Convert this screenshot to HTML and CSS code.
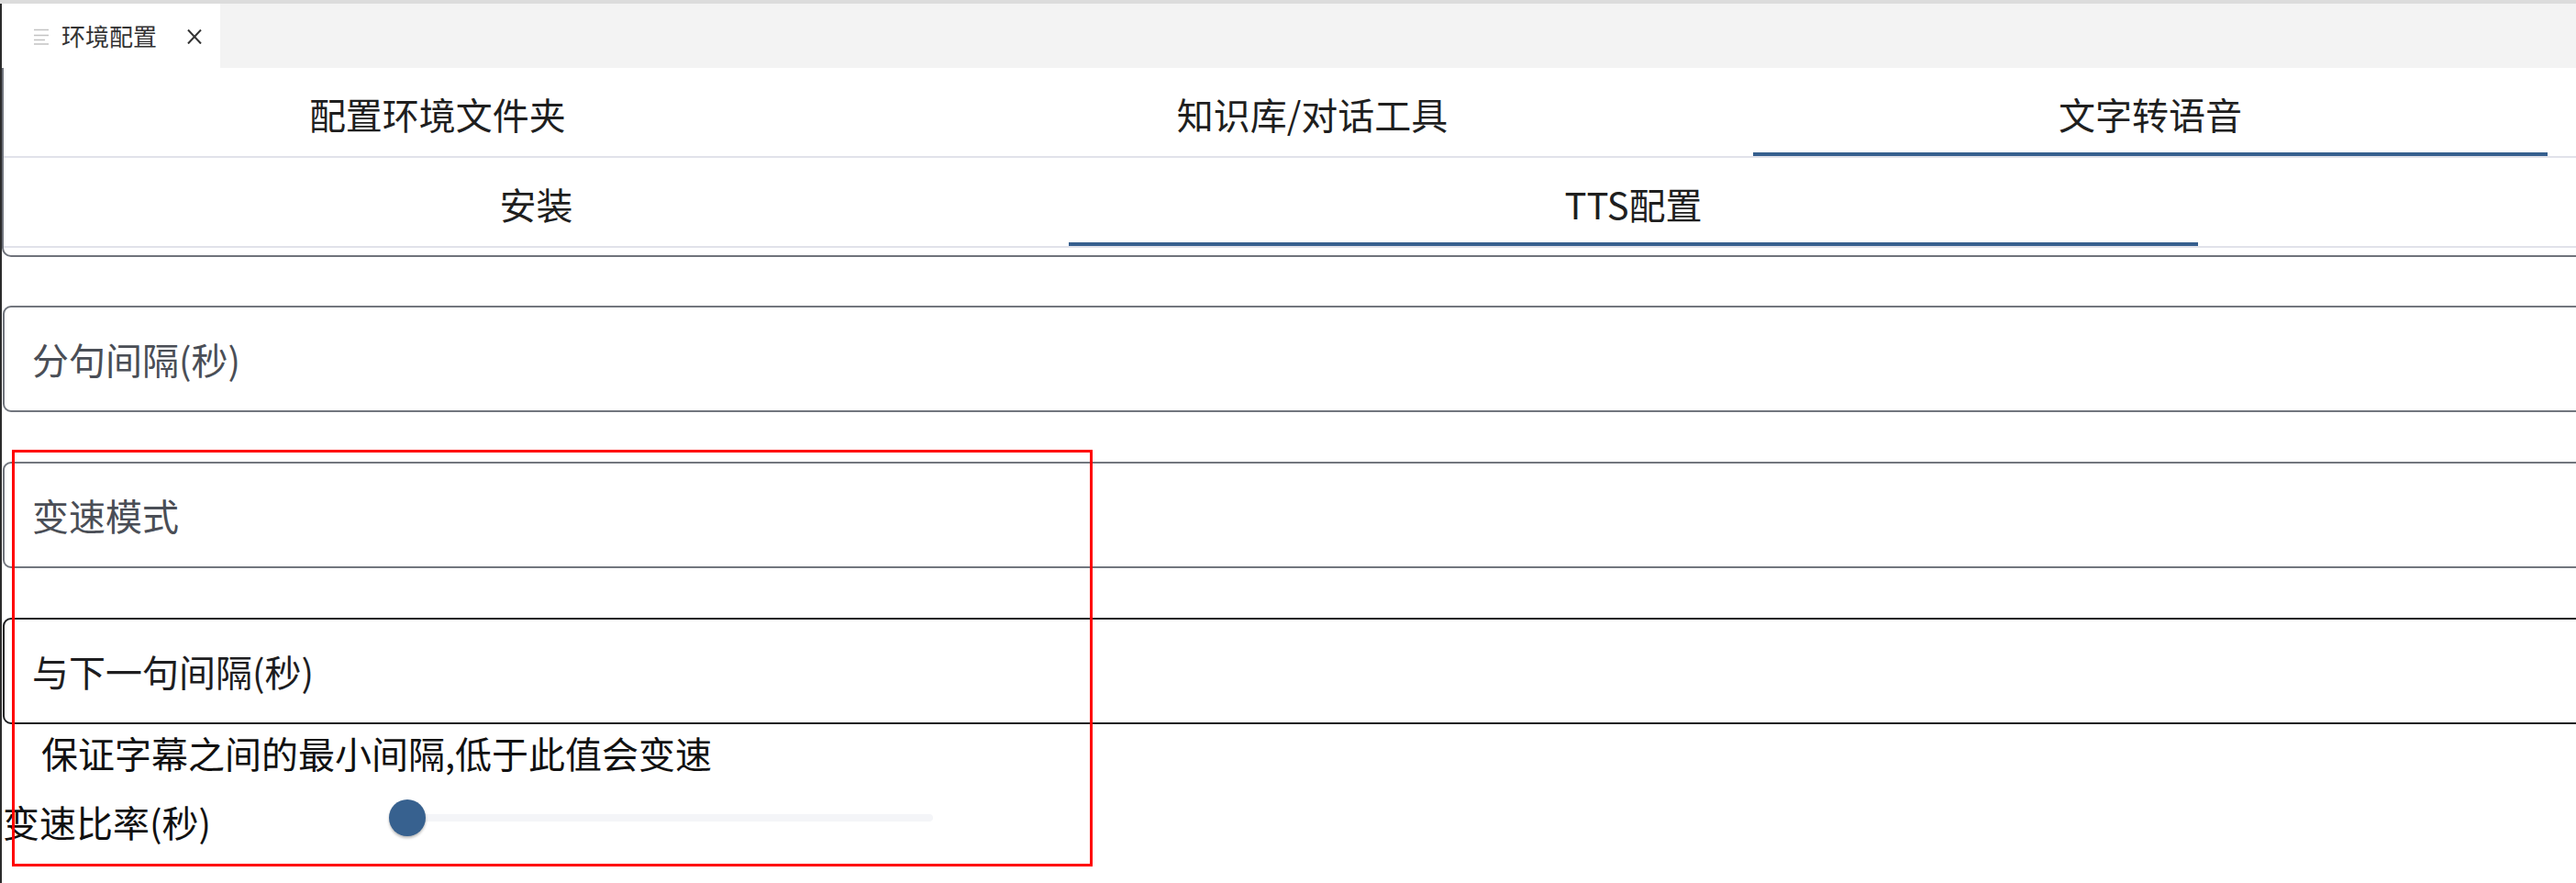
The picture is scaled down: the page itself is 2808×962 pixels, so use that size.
FILE: index.html
```html
<!DOCTYPE html>
<html lang="zh-CN">
<head>
<meta charset="utf-8">
<title>环境配置</title>
<link rel="stylesheet" href="styles.css">
</head>
<body>
<div class="topband"></div>
<div class="app">
  <div class="tabbar">
    <div class="doc-tab">
      <svg class="doc-icon" width="16" height="18" viewBox="0 0 16 18">
        <path d="M0 1.5H16M0 7.5H16M0 12.5H12M0 17H16" stroke="#c2c2c2" stroke-width="1.6" fill="none"/>
      </svg>
      <span class="doc-title">环境配置</span>
      <svg class="doc-close" width="18" height="16" viewBox="0 0 18 16">
        <path d="M2 0.5L16 15.5M16 0.5L2 15.5" stroke="#333" stroke-width="2" fill="none"/>
      </svg>
    </div>
  </div>

  <div class="panel">
    <div class="tabs tabs-main">
      <div class="tab">配置环境文件夹</div>
      <div class="tab">知识库/对话工具</div>
      <div class="tab active">文字转语音</div>
    </div>
    <div class="tabs tabs-sub">
      <div class="tab">安装</div>
      <div class="tab active">TTS配置</div>
    </div>
  </div>

  <div class="form">
    <div class="field"><span class="field-label">分句间隔(秒)</span></div>
    <div class="field"><span class="field-label">变速模式</span></div>
    <div class="field field-focus"><span class="field-label">与下一句间隔(秒)</span></div>
    <div class="hint">保证字幕之间的最小间隔,低于此值会变速</div>
    <div class="slider-row">
      <span class="slider-label">变速比率(秒)</span>
      <div class="slider">
        <div class="slider-track"></div>
        <div class="slider-thumb"></div>
      </div>
    </div>
  </div>
</div>
<div class="annotation"></div>
</body>
</html>
```

FILE: styles.css
```css
html, body {
  margin: 0;
  padding: 0;
  width: 2808px;
  height: 962px;
  overflow: hidden;
  background: #ffffff;
}

body {
  position: relative;
  font-family: "Noto Sans CJK SC", "Microsoft YaHei", "Noto Sans", sans-serif;
  color: #222;
}

.topband {
  height: 4px;
  background: #dcdcdc;
}

.app {
  height: 958px;
  border-left: 2px solid #2b2b2b;
  overflow: hidden;
}

/* document tab bar */
.tabbar {
  height: 70px;
  background: #f3f3f3;
  display: flex;
}

.doc-tab {
  width: 238px;
  height: 70px;
  background: #ffffff;
  display: flex;
  align-items: center;
  box-sizing: border-box;
  padding-left: 35px;
}

.doc-icon {
  display: block;
  margin-top: 2px;
}

.doc-title {
  margin-left: 14px;
  font-size: 26px;
  line-height: 30px;
  color: #333;
  width: 122px;
  white-space: nowrap;
}

.doc-close {
  display: block;
  margin-left: 14px;
  margin-top: 2px;
}

/* section tabs */
.panel {
  border-left: 2px solid #6f737b;
  border-bottom: 2px solid #6f737b;
  border-bottom-left-radius: 10px;
  padding-bottom: 8px;
}

.tabs {
  display: flex;
  border-bottom: 2px solid #e1e2ea;
}

.tabs-main {
  padding-right: 31px;
}

.tabs-sub {
  padding-right: 412px;
}

.tab {
  flex: 1 1 auto;
  height: 96px;
  box-sizing: border-box;
  padding-top: 4px;
  display: flex;
  align-items: center;
  justify-content: center;
  font-size: 40px;
  line-height: 48px;
  color: #1f1f1f;
  white-space: nowrap;
}

.tab.active {
  box-shadow: inset 0 -4px 0 #365f8e;
}

/* form */
.form {
  padding-top: 53px;
}

.field {
  height: 116px;
  box-sizing: border-box;
  width: 2900px;
  margin-left: 1px;
  margin-bottom: 54px;
  border: 2px solid #72767e;
  border-radius: 9px;
  display: flex;
  align-items: center;
  padding-left: 30px;
}

.field-label {
  font-size: 40px;
  line-height: 48px;
  color: #4a4e56;
}

.field-focus {
  border-color: #1e1f22;
  margin-bottom: 0;
}

.field-focus .field-label {
  color: #1d1d1f;
}

.hint {
  margin-top: 7px;
  padding-left: 43px;
  font-size: 40px;
  line-height: 48px;
  color: #111;
  white-space: nowrap;
}

.slider-row {
  margin-top: 21px;
  height: 60px;
  display: flex;
  align-items: center;
}

.slider-label {
  width: 421px;
  padding-left: 1px;
  font-size: 40px;
  line-height: 48px;
  color: #111;
  white-space: nowrap;
}

.slider {
  position: relative;
  width: 593px;
  height: 40px;
  margin-top: -8px;
}

.slider-track {
  margin-top: 16px;
  height: 8px;
  border-radius: 4px;
  background: #f4f5f8;
}

.slider-thumb {
  position: absolute;
  left: 0;
  top: 0;
  width: 40px;
  height: 40px;
  border-radius: 50%;
  background: #37618f;
  box-shadow: 0 2px 3px rgba(0, 0, 0, 0.28);
}

/* red annotation rectangle drawn over the screenshot */
.annotation {
  position: absolute;
  left: 13px;
  top: 490px;
  width: 1178px;
  height: 454px;
  box-sizing: border-box;
  border: 3px solid #ff0000;
  pointer-events: none;
}
```
